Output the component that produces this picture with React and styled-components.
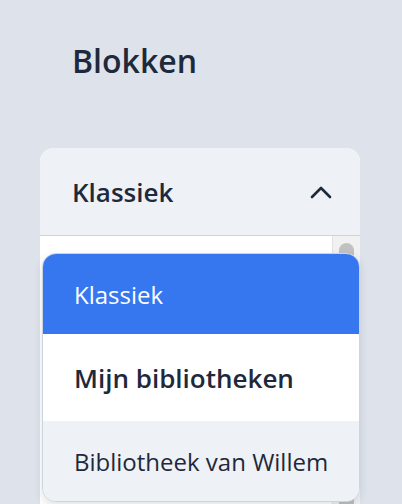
import React from 'react';
import styled, { createGlobalStyle } from 'styled-components';

const GlobalStyle = createGlobalStyle`
  html, body {
    margin: 0;
    padding: 0;
    overflow: hidden;
    background: #dee3eb;
    font-family: "Open Sans", "Noto Sans", sans-serif;
    color: #1e293b;
  }
`;

const Page = styled.div`
  padding: 35px 42px 0 40px;
`;

const Title = styled.h1`
  margin: 0 0 61px 32px;
  font-size: 32px;
  line-height: 52px;
  font-weight: 600;
`;

const Card = styled.div`
  position: relative;
  width: 320px;
  border-radius: 14px;
  background: #fff;
`;

const Header = styled.div`
  display: flex;
  align-items: center;
  justify-content: space-between;
  height: 87px;
  padding: 0 28px 0 32px;
  background: #eef1f6;
  border-bottom: 1px solid #cbd5e1;
  border-radius: 14px 14px 0 0;
  font-size: 26px;
  font-weight: 600;
`;

const Body = styled.div`
  display: flex;
  height: 320px;
`;

const List = styled.div`
  flex: 1;
  background: #fff;
`;

const Track = styled.div`
  width: 28px;
  background: #f1f1f1;
  border-left: 1px solid #e2e2e2;
  padding: 7px 0 0 6px;
  box-sizing: border-box;
`;

const Thumb = styled.div`
  width: 15px;
  height: 300px;
  border-radius: 8px;
  background: #c1c1c1;
`;

const Menu = styled.div`
  position: absolute;
  top: 105px;
  left: 2px;
  right: 0;
  border: 1px solid #cbd5e1;
  border-radius: 14px;
  overflow: hidden;
  background: #fff;
  box-shadow: 0 4px 10px rgba(15, 23, 42, 0.12);
`;

const Option = styled.div`
  display: flex;
  align-items: center;
  height: ${(p) => p.h || 80}px;
  padding-left: 31px;
  font-size: ${(p) => (p.group ? 26 : 24)}px;
  font-weight: ${(p) => (p.group ? 600 : 400)};
  background: ${(p) => (p.selected ? '#3677ef' : p.hover ? '#eef1f6' : '#fff')};
  color: ${(p) => (p.selected ? '#fff' : '#1e293b')};
`;

const Chevron = () => (
  <svg width="22" height="14" viewBox="0 0 22 14" fill="none">
    <path d="M2 12 L11 3 L20 12" stroke="#1e293b" strokeWidth="2.6" strokeLinecap="round" strokeLinejoin="round" />
  </svg>
);

const App = () => (
  <>
    <GlobalStyle />
    <Page>
      <Title>Blokken</Title>
      <Card>
        <Header>
          Klassiek
          <Chevron />
        </Header>
        <Body>
          <List />
          <Track>
            <Thumb />
          </Track>
        </Body>
        <Menu>
          <Option selected>Klassiek</Option>
          <Option group h={87}>Mijn bibliotheken</Option>
          <Option hover>Bibliotheek van Willem</Option>
        </Menu>
      </Card>
    </Page>
  </>
);

export default App;
